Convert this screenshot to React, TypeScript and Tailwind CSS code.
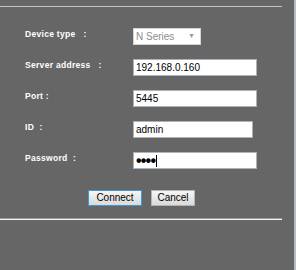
export default function App() {
  const label = "text-[8.5px] leading-[10px] font-bold text-white tracking-[0.3px] pt-px whitespace-pre";
  const input =
    "h-[17px] bg-white border border-[#a9b3bd] flex items-center pl-[2px] text-[10px] leading-none text-black";
  return (
    <div
      className="w-[296px] h-[270px] bg-[#666666] flex"
      style={{ fontFamily: '"Liberation Sans", Arial, sans-serif' }}
    >
      <div className="w-[294px] flex flex-col pt-[6px]">
        <div className="w-[282px] h-px bg-[#c4c4c4]" />
        <div className="mt-[21px] flex flex-col gap-[14px]">
          <div className="flex h-[17px]">
            <div className={`${label} w-[108px] pl-[25px] box-content`}>Device type   :</div>
            <div className="h-[17px] w-[68px] bg-white border border-[#d4d4d4] flex items-center justify-between pl-[2px] pr-[5px] text-[10px] text-[#8c8c8c]">
              <span>N Series</span>
              <span className="text-[7px] text-[#9a9a9a]">▼</span>
            </div>
          </div>
          <div className="flex h-[17px]">
            <div className={`${label} w-[108px] pl-[25px] box-content`}>Server address   :</div>
            <div className={`${input} w-[124px]`}>192.168.0.160</div>
          </div>
          <div className="flex h-[17px]">
            <div className={`${label} w-[108px] pl-[25px] box-content`}>Port :</div>
            <div className={`${input} w-[124px]`}>5445</div>
          </div>
          <div className="flex h-[17px]">
            <div className={`${label} w-[108px] pl-[25px] box-content`}>ID  :</div>
            <div className={`${input} w-[120px]`}>admin</div>
          </div>
          <div className="flex h-[17px]">
            <div className={`${label} w-[108px] pl-[25px] box-content`}>Password  :</div>
            <div className={`${input} w-[124px] border-[#7aa9d6]`}>
              <span className="text-[16px] font-bold tracking-[-0.8px]">••••</span>
              <span className="w-px h-[12px] bg-black ml-[1px]" />
            </div>
          </div>
        </div>
        <div className="mt-[21px] flex gap-[9px] pl-[88px]">
          <button className="w-[54px] h-[16px] border border-[#3a9ad9] bg-gradient-to-b from-[#f6f6f6] to-[#dadada] text-[10px] leading-none text-black">
            Connect
          </button>
          <button className="w-[44px] h-[16px] border border-[#b4b4b4] bg-gradient-to-b from-[#f6f6f6] to-[#dadada] text-[10px] leading-none text-black">
            Cancel
          </button>
        </div>
        <div className="mt-[12px] w-[282px] h-[2px] border-t border-[#9a9a9a] bg-[#f4f4f4]" />
      </div>
      <div className="w-[2px] bg-[#b5bcc4]" />
    </div>
  );
}
